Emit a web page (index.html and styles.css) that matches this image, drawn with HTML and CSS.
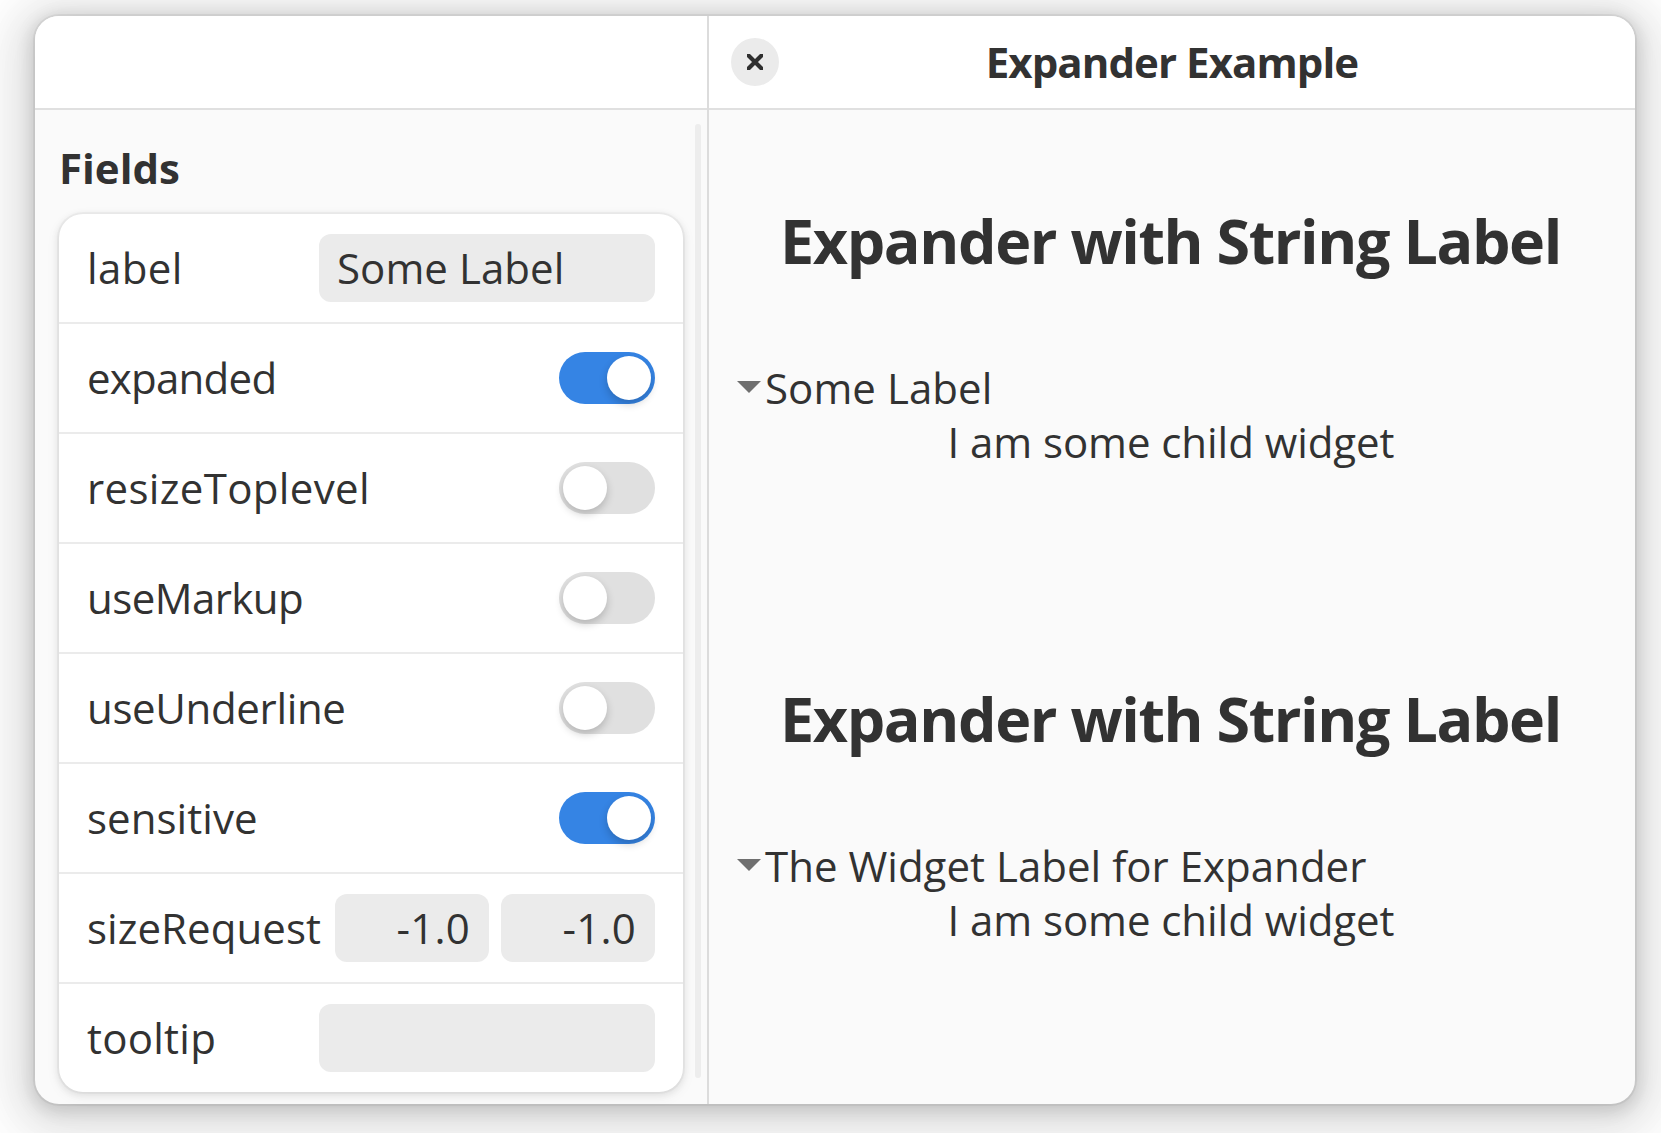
FILE: index.html
```html
<!DOCTYPE html>
<html lang="en">
<head>
<meta charset="utf-8">
<title>Expander Example</title>
<link rel="stylesheet" href="styles.css">
</head>
<body>
<div class="window">
  <aside class="sidebar">
    <header class="headerbar"></header>
    <div class="sidebar-body">
      <div class="fields">
        <h2 class="fields-title">Fields</h2>
        <div class="card">
          <div class="row"><span class="name ls-label">label</span><div class="entry"><span class="ls-some">Some Label</span></div></div>
          <div class="row"><span class="name ls-expanded">expanded</span><div class="switch on"><i class="knob"></i></div></div>
          <div class="row"><span class="name ls-resize">resizeToplevel</span><div class="switch"><i class="knob"></i></div></div>
          <div class="row"><span class="name ls-markup">useMarkup</span><div class="switch"><i class="knob"></i></div></div>
          <div class="row"><span class="name ls-underline">useUnderline</span><div class="switch"><i class="knob"></i></div></div>
          <div class="row"><span class="name ls-sensitive">sensitive</span><div class="switch on"><i class="knob"></i></div></div>
          <div class="row"><span class="name ls-size">sizeRequest</span><div class="pair"><div class="entry number">-1.0</div><div class="entry number">-1.0</div></div></div>
          <div class="row"><span class="name ls-tooltip">tooltip</span><div class="entry"></div></div>
        </div>
      </div>
      <div class="scrollbar"></div>
    </div>
  </aside>
  <main class="content">
    <header class="headerbar">
      <button class="close" aria-label="Close">
        <svg width="16" height="16" viewBox="0 0 16 16"><path d="M1 1L15 15M15 1L1 15" fill="none" stroke="#2f2f2f" stroke-width="4.2" stroke-linecap="square"/></svg>
      </button>
      <h1 class="title">Expander Example</h1>
    </header>
    <section class="demo">
      <h2 class="demo-title">Expander with String Label</h2>
      <div class="expander">
        <svg class="arrow" width="24" height="12" viewBox="0 0 24 12"><path d="M0 0H24L12 12Z" fill="#6f6f6f"/></svg>
        <span class="ls-some">Some Label</span>
      </div>
      <p class="child">I am some child widget</p>
    </section>
    <section class="demo">
      <h2 class="demo-title">Expander with String Label</h2>
      <div class="expander">
        <svg class="arrow" width="24" height="12" viewBox="0 0 24 12"><path d="M0 0H24L12 12Z" fill="#6f6f6f"/></svg>
        <span class="ls-widget">The Widget Label for Expander</span>
      </div>
      <p class="child">I am some child widget</p>
    </section>
  </main>
</div>
</body>
</html>
```
FILE: styles.css
```css
* { box-sizing: border-box; }
html { overflow: hidden; }
body {
  margin: 0;
  height: 1133px;
  padding: 16px 26px 29px 35px;
  overflow: hidden;
  background: #fff;
  color: #323232;
  font: 400 42px/54px "Open Sans", "Noto Sans", sans-serif;
}
h1, h2, p { margin: 0; }

.window {
  display: flex;
  width: 1600px;
  height: 1088px;
  border-radius: 24px;
  background: #fafafa;
  box-shadow:
    0 4px 16px 4px rgba(0, 0, 0, .13),
    0 6px 40px 20px rgba(0, 0, 0, .09),
    0 12px 64px 32px rgba(0, 0, 0, .04),
    0 0 0 2px rgba(0, 0, 0, .05);
}
.sidebar {
  display: flex;
  flex-direction: column;
  width: 674px;
  border-right: 2px solid #dcdcdc;
}
.headerbar {
  display: flex;
  align-items: center;
  flex: none;
  height: 94px;
  border-bottom: 2px solid #e0e0e0;
  background: #fff;
}
.sidebar .headerbar { border-top-left-radius: 24px; }
.content .headerbar {
  display: grid;
  grid-template-columns: 70px 1fr 70px;
  border-top-right-radius: 24px;
}

.sidebar-body {
  display: flex;
  flex: 1;
  padding-left: 24px;
}
.fields { width: 624px; }
.fields-title {
  padding: 31px 0 19px;
  font-size: 42px;
  line-height: 54px;
  font-weight: 700;
}
.card {
  border-radius: 24px;
  background: #fff;
  box-shadow:
    0 0 0 2px rgba(0, 0, 0, .03),
    0 2px 6px 2px rgba(0, 0, 0, .07),
    0 4px 12px 4px rgba(0, 0, 0, .03);
}
.row {
  display: flex;
  align-items: center;
  justify-content: space-between;
  height: 110px;
  padding: 0 28px;
  border-bottom: 2px solid #ebebeb;
}
.row:last-child { height: 108px; border-bottom: 0; }

.entry {
  width: 336px;
  height: 68px;
  padding: 7px 18px;
  border-radius: 12px;
  background: #ebebeb;
}
.pair { display: flex; gap: 12px; }
.number {
  width: 154px;
  padding: 7px 19px;
  text-align: right;
  letter-spacing: .2px;
}
.switch {
  display: flex;
  width: 96px;
  height: 52px;
  padding: 4px;
  border-radius: 26px;
  background: #e0e0e0;
}
.switch.on { justify-content: flex-end; background: #3584e4; }
.knob {
  width: 44px;
  height: 44px;
  border-radius: 50%;
  background: #fff;
  box-shadow: 0 4px 8px rgba(0, 0, 0, .2);
}
.scrollbar {
  width: 6px;
  height: 954px;
  margin: 14px 0 0 12px;
  border-radius: 3px;
  background: #ededed;
}

.content { flex: 1; }
.close {
  display: grid;
  place-items: center;
  width: 48px;
  height: 48px;
  margin-left: 22px;
  padding: 0;
  border: 0;
  border-radius: 50%;
  background: #ebebeb;
}
.title {
  font-size: 42px;
  line-height: 54px;
  font-weight: 700;
  letter-spacing: -.93px;
  text-align: center;
}

.demo { height: 478px; padding-top: 89px; }
.demo-title {
  margin-bottom: 78px;
  padding-right: 3px;
  font-size: 61px;
  line-height: 84px;
  font-weight: 700;
  letter-spacing: -1.42px;
  text-align: center;
  white-space: nowrap;
}
.expander {
  display: flex;
  align-items: center;
  gap: 4px;
  padding-left: 28px;
}
.arrow { margin-bottom: 2px; }
.child { padding-right: 2px; text-align: center; letter-spacing: -.06px; }

/* Per-label tracking */
.ls-label { letter-spacing: .4px; }
.ls-some { letter-spacing: .06px; }
.ls-expanded { letter-spacing: -.75px; }
.ls-resize { letter-spacing: .34px; }
.ls-markup { letter-spacing: -.55px; }
.ls-underline { letter-spacing: -.35px; }
.ls-sensitive { letter-spacing: .05px; }
.ls-size { letter-spacing: .05px; }
.ls-tooltip { letter-spacing: .25px; }
.ls-widget { letter-spacing: .02px; }
```
